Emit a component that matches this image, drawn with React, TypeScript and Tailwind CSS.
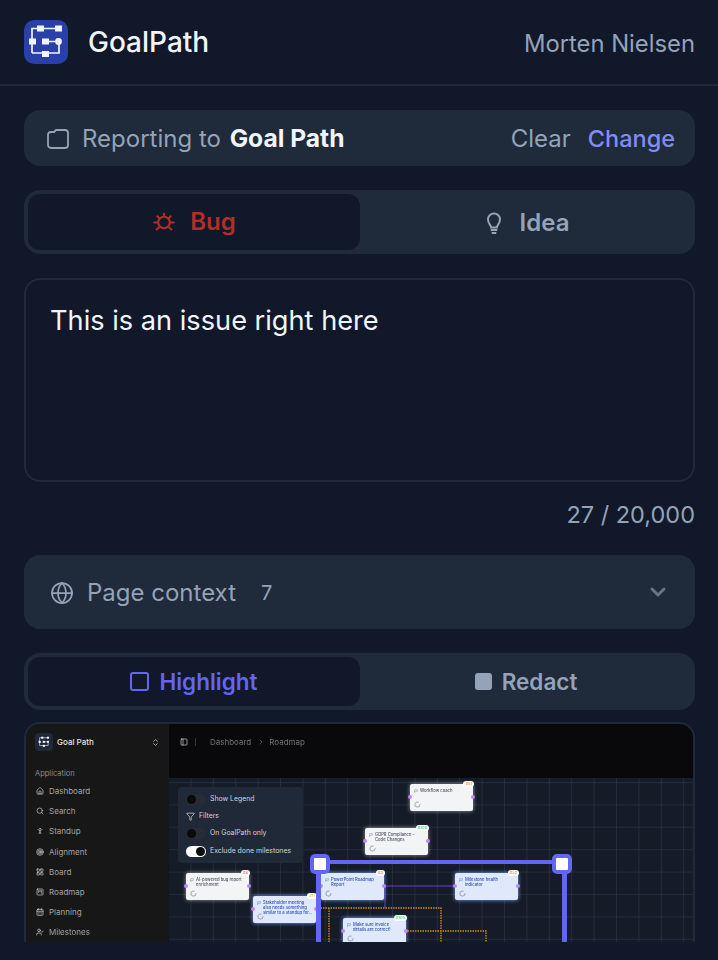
import React from 'react';
import {
  Globe,
  ChevronDown,
  ChevronsUpDown,
  ChevronRight,
  PanelLeft,
  House,
  Search,
  PersonStanding,
  Target,
  LayoutGrid,
  SquareKanban,
  CalendarDays,
  UserCheck,
  Funnel,
  LoaderCircle,
  Flag,
} from 'lucide-react';

const LogoMark: React.FC<{ className?: string }> = ({ className }) => (
  <svg viewBox="0 0 44 44" className={className}>
    <path d="M8 33V8.5H34M8 33H35V21.5M25 21.5H34" fill="none" stroke="currentColor" strokeWidth="1.7" />
    <rect x="13" y="5.5" width="7" height="6" fill="currentColor" />
    <rect x="31" y="5.5" width="7" height="6" fill="currentColor" />
    <rect x="5" y="18.5" width="7" height="6" fill="currentColor" />
    <rect x="18" y="18.5" width="7" height="6" fill="currentColor" />
    <circle cx="34.5" cy="21.5" r="3.4" fill="currentColor" />
    <rect x="18" y="31" width="7" height="6" fill="currentColor" />
  </svg>
);

const BugIcon = () => (
  <svg viewBox="0 0 24 24" fill="none" stroke="currentColor" strokeWidth="2.1" className="h-6 w-6">
    <circle cx="12" cy="12.5" r="5.8" />
    <path d="M12 3v3.5M4.8 5.8l3 3M19.2 5.8l-3 3M1.5 12.5h4.5M18 12.5h4.5M4 20l3.6-3M20 20l-3.6-3" />
  </svg>
);

const BulbIcon = () => (
  <svg viewBox="0 0 24 24" fill="none" stroke="currentColor" strokeWidth="2" className="h-6 w-6">
    <path d="M9.2 16.5c0-2.2-3.2-3.6-3.2-8a6 6 0 0 1 12 0c0 4.4-3.2 5.8-3.2 8z" />
    <path d="M8.7 19h6.6M9.7 22h4.6" strokeWidth="2.2" />
  </svg>
);

const FolderIcon = () => (
  <svg viewBox="0 0 24 24" fill="none" stroke="currentColor" strokeWidth="1.8" className="h-6 w-6">
    <path d="M2 8a3 3 0 0 1 3-3h3l2-2h9a3 3 0 0 1 3 3v12a3 3 0 0 1-3 3H5a3 3 0 0 1-3-3z" />
  </svg>
);

const sidebarItems = [
  { label: 'Dashboard', icon: House },
  { label: 'Search', icon: Search },
  { label: 'Standup', icon: PersonStanding },
  { label: 'Alignment', icon: Target },
  { label: 'Board', icon: LayoutGrid },
  { label: 'Roadmap', icon: SquareKanban },
  { label: 'Planning', icon: CalendarDays },
  { label: 'Milestones', icon: UserCheck },
];

const Toggle: React.FC<{ on?: boolean }> = ({ on }) => (
  <span className={`flex h-[11px] w-[20px] items-center rounded-full px-px ${on ? 'justify-end bg-white' : 'bg-[#272d38]'}`}>
    <span className="h-[9px] w-[9px] rounded-full bg-[#0a0a0a]" />
  </span>
);

interface RoadmapNodeProps {
  className: string;
  title: string;
  badge: string;
  badgeClass: string;
  active?: boolean;
}

const RoadmapNode: React.FC<RoadmapNodeProps> = ({ className, title, badge, badgeClass, active }) => (
  <div
    className={`absolute h-[27px] w-[63px] rounded-[2px] pt-[4px] pr-[3px] pl-[4px] ${className} ${
      active
        ? 'bg-[#dfe9fb] text-[#2f4fb5] shadow-[0_0_4px_#7aa7ff]'
        : 'bg-[#f3f4f6] text-[#4b5563] shadow-[0_0_4px_rgba(255,255,255,0.55)]'
    }`}
  >
    <div className="flex gap-[2px]">
      <Flag className="mt-px h-[4px] w-[4px] shrink-0" />
      <span className="text-[4.2px] leading-[5px] font-medium">{title}</span>
    </div>
    <LoaderCircle className="absolute bottom-[3px] left-[4px] h-[7px] w-[7px] text-[#6b7280]" />
    <span className={`absolute -top-[3px] -right-px rounded-full bg-white px-[2px] text-[4px] leading-[6px] ${badgeClass}`}>{badge}</span>
    <span className="absolute top-[11px] -left-[2px] h-[4px] w-[4px] rounded-full bg-[#c084fc]" />
    <span className="absolute top-[11px] -right-[2px] h-[4px] w-[4px] rounded-full bg-[#c084fc]" />
  </div>
);

const ScreenshotPreview = () => (
  <div className="h-[220px] overflow-hidden rounded-t-2xl border-x-2 border-t-2 border-[#1f2a3a]">
    <div className="flex h-full blur-[0.4px]">
      <aside className="w-[143px] shrink-0 bg-[#171717] pt-[9px] pl-[9px] text-[#a3a3a3]">
        <div className="flex items-center">
          <span className="flex h-[18px] w-[18px] items-center justify-center rounded-[4px] bg-[#1e293b] text-white">
            <LogoMark className="h-[14px] w-[14px]" />
          </span>
          <span className="ml-1 w-[62px] text-[8px] font-medium whitespace-nowrap text-[#e5e5e5]">Goal Path</span>
          <ChevronsUpDown className="ml-[32px] h-[9px] w-[9px] text-[#d4d4d4]" />
        </div>
        <p className="mt-[18px] text-[7.5px] leading-[10px] text-[#8a8a8a]">Application</p>
        <ul className="mt-[2px]">
          {sidebarItems.map((item) => (
            <li key={item.label} className="flex h-[20.2px] items-center gap-[5px] pl-px text-[8px]">
              <item.icon className="h-[8px] w-[8px] text-[#d4d4d4]" />
              {item.label}
            </li>
          ))}
        </ul>
      </aside>
      <div className="flex min-w-0 flex-1 flex-col">
        <div className="flex h-[54px] shrink-0 items-start gap-[7px] bg-[#09090b] pt-[12px] pl-[11px] text-[8px] leading-[12px] text-[#737373]">
          <PanelLeft className="mt-[2px] h-[8px] w-[8px] text-[#d4d4d4]" />
          <span className="mt-[2px] h-[8px] w-px bg-[#333]" />
          <span className="ml-[7px]">Dashboard</span>
          <ChevronRight className="mt-[2px] -ml-[1px] h-[8px] w-[8px]" />
          <span className="-ml-[3px]">Roadmap</span>
        </div>
        <div className="relative flex-1 bg-[#151b27]">
          {/* Roadmap canvas: grid and connectors */}
          <svg className="absolute inset-0 h-full w-full">
            <defs>
              <pattern id="grid" x="-1" y="4" width="22.4" height="22.4" patternUnits="userSpaceOnUse">
                <path d="M22.4 0H0V22.4" fill="none" stroke="#333b49" strokeWidth="1" />
              </pattern>
            </defs>
            <rect width="100%" height="100%" fill="url(#grid)" />
            <path d="M214 108H286M216 108V130" fill="none" stroke="#6d3fd0" strokeWidth="1" />
            <path d="M149 130H272V164M160 130V164M236 153H317V164" fill="none" stroke="#c98a2b" strokeWidth="1.4" strokeDasharray="1.5 1" />
          </svg>
          <RoadmapNode className="top-[6px] left-[241px]" title="Workflow coach" badge="#51" badgeClass="text-[#f97316]" />
          <RoadmapNode className="top-[50px] left-[196px]" title="GDPR Compliance – Code Changes" badge="#108" badgeClass="text-[#22c55e]" />
          <RoadmapNode className="top-[95px] left-[17px]" title="AI-powered bug report enrichment" badge="#8" badgeClass="text-[#ef4444]" />
          <RoadmapNode active className="top-[118px] left-[84px]" title="Stakeholder meeting also needs something similar to a standup for..." badge="#11" badgeClass="text-[#eab308]" />
          <RoadmapNode active className="top-[95px] left-[152px]" title="PowerPoint Roadmap Report" badge="#3" badgeClass="text-[#ef4444]" />
          <RoadmapNode active className="top-[95px] left-[286px]" title="Milestone health indicator" badge="#32" badgeClass="text-[#f97316]" />
          <RoadmapNode active className="top-[140px] left-[174px]" title="Make sure invoice details are correct!" badge="#105" badgeClass="text-[#22c55e]" />
          {/* Floating filter panel */}
          <div className="absolute top-[9px] left-[9px] h-[76px] w-[125px] rounded-[4px] bg-[#1f2937] pt-[7px] pl-[8px] text-[6.9px] text-[#d4d4d8]">
            <div className="flex h-[11px] items-center gap-[4px]"><Toggle />Show Legend</div>
            <div className="mt-[6px] flex h-[11px] items-center gap-[4px]"><Funnel className="h-[9px] w-[9px]" />Filters</div>
            <div className="mt-[6px] flex h-[11px] items-center gap-[4px]"><Toggle />On GoalPath only</div>
            <div className="mt-[7px] flex h-[11px] items-center gap-[4px]"><Toggle on />Exclude done milestones</div>
          </div>
          {/* Highlight selection */}
          <div className="absolute top-[82px] left-[147px] h-[140px] w-[251px] border-x-[5px] border-t-[4px] border-[#6366f1]" />
          <span className="absolute top-[76px] left-[141px] h-[20px] w-[20px] rounded-[5px] border-[4px] border-[#6366f1] bg-white" />
          <span className="absolute top-[76px] left-[383px] h-[20px] w-[20px] rounded-[5px] border-[4px] border-[#6366f1] bg-white" />
        </div>
      </div>
    </div>
  </div>
);

export default function App() {
  return (
    <div className="h-[960px] overflow-hidden bg-[#10182a] font-['Inter',sans-serif]">
      <header className="flex h-[86px] items-center justify-between border-b-2 border-[#1f2a3a] pr-[23px] pl-6">
        <div className="flex items-center gap-5">
          <span className="h-11 w-11 rounded-[10px] bg-[#2a40a8] text-[#f1f5f9]">
            <LogoMark className="h-11 w-11" />
          </span>
          <h1 className="text-[28px] font-medium text-[#f1f5f9]">GoalPath</h1>
        </div>
        <span className="pt-[3px] text-[23.8px] text-[#94a3b8]">Morten Nielsen</span>
      </header>

      <main className="pt-6 pr-[23px] pl-6">
        {/* Reporting target */}
        <div className="flex h-14 items-center justify-between rounded-2xl bg-[#1f2a3a] pr-5 pl-[22px] text-2xl">
          <div className="flex items-center gap-3 pt-px text-[#94a3b8]">
            <FolderIcon />
            <span>
              Reporting to <strong className="ml-[2px] text-[24.6px] font-bold text-[#f1f5f9]">Goal Path</strong>
            </span>
          </div>
          <div className="flex gap-[17px] pt-px">
            <button className="text-[#94a3b8]">Clear</button>
            <button className="text-[23.5px] font-medium text-[#818cf8]">Change</button>
          </div>
        </div>

        {/* Report type */}
        <div className="mt-6 flex h-16 rounded-2xl bg-[#1f2a3a] p-1 text-2xl font-semibold">
          <button className="flex w-[332px] items-center justify-center gap-[14px] rounded-xl bg-[#10182a] text-[#b12f26]">
            <BugIcon />
            Bug
          </button>
          <button className="flex flex-1 items-center justify-center gap-[14px] pt-px text-[#94a3b8]">
            <BulbIcon />
            Idea
          </button>
        </div>

        {/* Description */}
        <div className="mt-6 h-[204px] rounded-2xl border-2 border-[#1f2a3a] px-[24px] pt-[23px] text-[27.2px] leading-[36px] text-[#f1f5f9]">
          This is an issue right here
        </div>
        <p className="mt-[19px] text-right text-[23.5px] leading-[28px] text-[#94a3b8]">27 / 20,000</p>

        {/* Page context */}
        <div className="mt-[26px] flex h-[74px] items-center justify-between rounded-2xl bg-[#1f2a3a] pr-[25px] pl-[26px] text-[#94a3b8]">
          <div className="flex items-center pt-px text-2xl">
            <Globe className="h-6 w-6" strokeWidth={1.75} />
            <span className="ml-[13px]">Page context</span>
            <span className="ml-[25px] text-xl">7</span>
          </div>
          <ChevronDown className="h-6 w-6 text-[#64748b]" strokeWidth={3} />
        </div>

        {/* Annotation mode */}
        <div className="mt-6 flex h-[57px] rounded-2xl bg-[#1f2a3a] p-1 text-[22.5px] font-semibold">
          <button className="flex w-[332px] items-center justify-center gap-[10px] rounded-xl bg-[#10182a] text-[#6366f1]">
            <span className="h-[19px] w-[19px] rounded-[3px] border-2 border-[#6366f1]" />
            <span className="pt-px">Highlight</span>
          </button>
          <button className="flex flex-1 items-center justify-center gap-[10px] pl-px text-[#94a3b8]">
            <span className="h-[17px] w-[17px] rounded-[3px] bg-[#94a3b8]" />
            <span className="pt-px">Redact</span>
          </button>
        </div>

        <div className="mt-3">
          <ScreenshotPreview />
        </div>
      </main>
    </div>
  );
}
